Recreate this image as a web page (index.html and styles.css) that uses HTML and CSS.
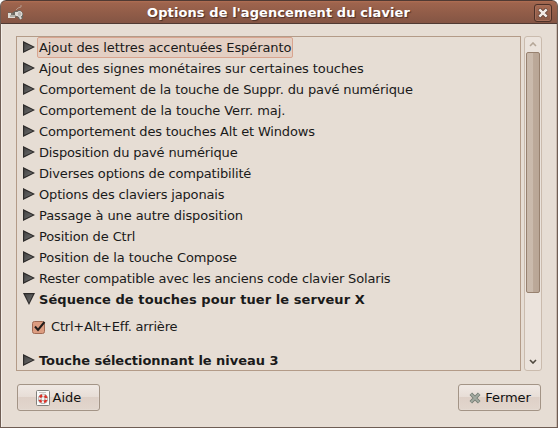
FILE: index.html
```html
<!DOCTYPE html>
<html lang="fr">
<head>
<meta charset="utf-8">
<title>Options de l'agencement du clavier</title>
<link rel="stylesheet" href="styles.css">
</head>
<body>
<div class="window">
  <header class="titlebar">
    <svg class="app-icon" width="18" height="18" viewBox="0 0 18 18">
      <path d="M9 6L11 4L14 3L14 1" fill="none" stroke="#b59a8c" stroke-width="1"/>
      <path d="M1 8L5 9L8 7L13 6L16 9L16 14L13 16L10 13L1 14Z" fill="#69665f"/>
      <path d="M1 9h3v2h4V8h3v4H8v2H1z" fill="#dedbd4"/>
      <path d="M3 12h6M5 9v2" stroke="#858178"/>
      <circle cx="12.5" cy="10" r="2.5" fill="#b8b5b0" stroke="#e9e7e3"/>
      <path d="M12.5 12l1.5 3" stroke="#d8d5d0" stroke-width="2"/>
    </svg>
    <h1>Options de l'agencement du clavier</h1>
    <button class="close" aria-label="Fermer">
      <svg width="10" height="10" viewBox="0 0 10 10"><path d="M1 1l8 8M9 1l-8 8" stroke="#5b3a30" stroke-width="4"/><path d="M1.3 1.3l7.4 7.4M8.7 1.3l-7.4 7.4" stroke="#f0e9e5" stroke-width="2.6"/></svg>
    </button>
  </header>
  <main>
    <div class="content">
      <ul class="tree">
        <li><i class="arrow"></i><span class="selected">Ajout des lettres accentuées Espéranto</span></li>
        <li><i class="arrow"></i><span>Ajout des signes monétaires sur certaines touches</span></li>
        <li><i class="arrow"></i><span>Comportement de la touche de Suppr. du pavé numérique</span></li>
        <li><i class="arrow"></i><span>Comportement de la touche Verr. maj.</span></li>
        <li><i class="arrow"></i><span>Comportement des touches Alt et Windows</span></li>
        <li><i class="arrow"></i><span>Disposition du pavé numérique</span></li>
        <li><i class="arrow"></i><span>Diverses options de compatibilité</span></li>
        <li><i class="arrow"></i><span>Options des claviers japonais</span></li>
        <li><i class="arrow"></i><span>Passage à une autre disposition</span></li>
        <li><i class="arrow"></i><span>Position de Ctrl</span></li>
        <li><i class="arrow"></i><span>Position de la touche Compose</span></li>
        <li><i class="arrow"></i><span>Rester compatible avec les anciens code clavier Solaris</span></li>
        <li class="bold"><i class="arrow open"></i><span>Séquence de touches pour tuer le serveur X</span></li>
        <li class="option">
          <svg width="14" height="14" viewBox="0 0 14 14"><rect x=".5" y="1.5" width="12" height="12" rx="2" fill="#dc9c80" stroke="#a06a54"/><path d="M3 6.5L6 10L12.5 2" fill="none" stroke="#211d1b" stroke-width="2"/></svg>
          <span>Ctrl+Alt+Eff. arrière</span>
        </li>
        <li class="bold"><i class="arrow"></i><span>Touche sélectionnant le niveau 3</span></li>
      </ul>
      <div class="scrollbar">
        <svg class="up" width="8" height="5" viewBox="0 0 8 5"><path d="M1 4l3-3l3 3" fill="none" stroke="#b5a798" stroke-width="1.6"/></svg>
        <div class="thumb"></div>
        <svg class="down" width="8" height="5" viewBox="0 0 8 5"><path d="M1 1l3 3l3-3" fill="none" stroke="#4f493f" stroke-width="1.6"/></svg>
      </div>
    </div>
    <footer>
      <button class="btn">
        <svg width="14" height="16" viewBox="0 0 14 16"><rect x=".5" y=".5" width="13" height="15" rx="1" fill="#fafafa" stroke="#81807c"/><path d="M3 2.5h7" stroke="#c6c6c3"/><circle cx="7" cy="8.8" r="3.4" fill="none" stroke="#858582" stroke-width="3.4"/><circle cx="7" cy="8.8" r="3.4" fill="none" stroke="#f1efee" stroke-width="2.4"/><circle cx="7" cy="8.8" r="3.4" fill="none" stroke="#dc3028" stroke-width="2.4" stroke-dasharray="2.9 2.44" stroke-dashoffset="-1.2"/></svg>
        <span>Aide</span>
      </button>
      <button class="btn close-btn">
        <svg width="12" height="12" viewBox="0 0 12 12"><path d="M1.8 1.8l8.4 8.4M10.2 1.8l-8.4 8.4" stroke="#737c73" stroke-width="3.6"/><path d="M2 2l8 8M10 2L2 10" stroke="#a3aaa1" stroke-width="1.8"/></svg>
        <span>Fermer</span>
      </button>
    </footer>
  </main>
</div>
</body>
</html>
```
FILE: styles.css
```css
* { box-sizing: border-box; }
body { margin: 0; background: #fff; font: 13px/21px "DejaVu Sans", sans-serif; color: #1a1a1a; }
.window { width: 558px; height: 428px; display: flex; flex-direction: column; border: 1px solid #6e5d54; border-top: 0; border-radius: 6px 6px 0 0; background: #e6ddd4; overflow: hidden; }
.titlebar { height: 24px; display: flex; align-items: center; margin: 0 -1px; padding: 2px 5px 0 6px; border: 1px solid #503a33; border-radius: 6px 6px 0 0; background: linear-gradient(#b06e53 0, #9e644d 2px, #845544 100%); }
.titlebar h1 { flex: 1; margin: 0; padding-right: 2px; text-align: center; font-size: 13px; line-height: 20px; letter-spacing: .09px; color: #fff; text-shadow: 1px 1px 1px #4a2e25; white-space: nowrap; }
.close { width: 18px; height: 18px; padding: 0; display: grid; place-items: center; border: 1px solid #4d3027; border-radius: 3px; background: linear-gradient(#a66a52, #895846); box-shadow: inset 0 0 0 1px #a66f5a; }
main { flex: 1; padding: 12px 14px 16px; border-left: 1px solid #f3eee9; border-right: 1px solid #cabbb0; border-bottom: 1px solid #cabbb0; }
.content { display: flex; height: 335px; gap: 3px; }
.tree { width: 505px; margin: 0; padding: 0; list-style: none; border: 1px solid #b39b88; white-space: nowrap; overflow: hidden; }
.tree li { height: 21px; display: flex; align-items: center; padding-left: 6px; letter-spacing: -.08px; }
.tree li:nth-child(3), .tree li:nth-child(10) { letter-spacing: -.125px; }
.tree li:nth-child(n+5):nth-child(-n+8), .tree li:nth-child(12) { letter-spacing: -.165px; }
.tree li span { height: 21px; padding: 0 1px; border: 1px solid transparent; border-radius: 2px; line-height: 19px; }
.tree li .selected { border-color: #d8a48f; background: #e3cfc3; }
.arrow { width: 12px; height: 12px; margin: 0 2px 1px 0; background: #2d2b2a; clip-path: polygon(0 0, 100% 50%, 0 100%); position: relative; }
.arrow::after { content: ""; position: absolute; inset: 0; background: linear-gradient(135deg, #444 10%, #777); clip-path: polygon(10% 16%, 82% 50%, 10% 84%); }
.arrow.open { clip-path: polygon(0 0, 100% 0, 50% 100%); }
.arrow.open::after { clip-path: polygon(16% 10%, 84% 10%, 50% 82%); }
.tree .option { height: 40px; padding: 0 0 7px 15px; gap: 3px; letter-spacing: -.19px; }
.tree .bold { font-weight: bold; letter-spacing: .07px; }
.tree .bold:last-child { letter-spacing: -.03px; }
.scrollbar { width: 18px; display: flex; flex-direction: column; align-items: center; border: 1px solid #cabbad; border-radius: 3px; background: #ebe3dc; }
.up { margin: 5px 0 5px; }
.thumb { width: 14px; height: 241px; border: 1px solid #97816f; border-radius: 2px; background: linear-gradient(90deg, #c9b9ab, #cbbbad 50%, #bca999 50%, #b9a696); }
.down { margin-top: auto; margin-bottom: 6px; }
footer { display: flex; justify-content: space-between; margin-top: 13px; padding: 0 1px; }
.btn { width: 83px; height: 27px; padding: 0; display: flex; align-items: center; justify-content: center; gap: 3px; border: 1px solid #a39486; border-radius: 3px; background: linear-gradient(#f0e9e4, #e7ddd6 48%, #ded0c7 50%, #e2d6cd); box-shadow: inset 0 0 0 1px #eee6e044; font: inherit; color: #111; }
.close-btn { letter-spacing: -.1px; gap: 4px; padding-left: 1px; }
```
